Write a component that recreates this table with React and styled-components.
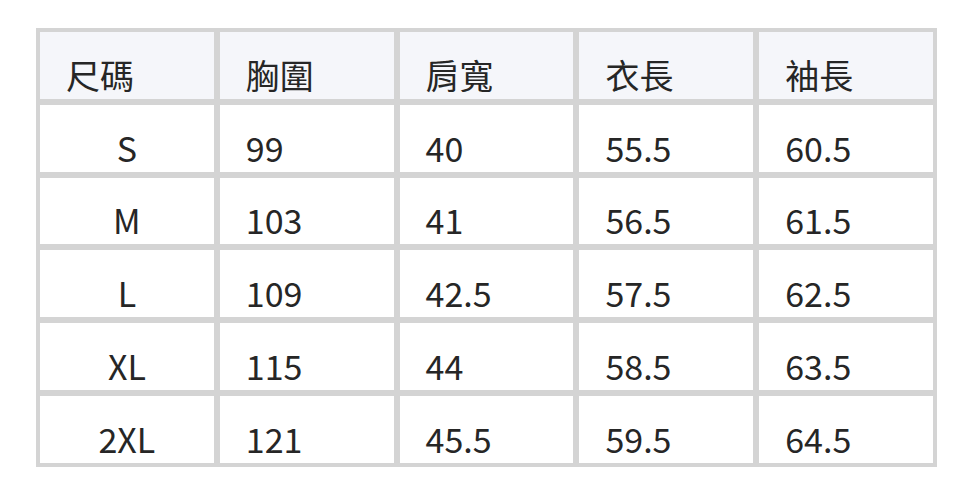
import React from 'react';
import styled, { createGlobalStyle } from 'styled-components';

const GlobalStyle = createGlobalStyle`
  html, body {
    margin: 0;
    padding: 0;
    background: #ffffff;
  }
  body {
    font-family: "Noto Sans CJK TC", "Noto Sans", sans-serif;
  }
`;

const Page = styled.div`
  padding: 28px 0 0 36px;
`;

const Table = styled.div`
  width: 901px;
  box-sizing: border-box;
  display: grid;
  grid-template-columns: repeat(5, 1fr);
  grid-auto-rows: 66.8px;
  gap: 6px;
  padding: 4px;
  background: #d4d4d4;
`;

const Cell = styled.div`
  display: flex;
  align-items: flex-end;
  justify-content: ${(p) => (p.$center ? 'center' : 'flex-start')};
  padding: 0 0 0 ${(p) => (p.$center ? '0' : '26px')};
  background: ${(p) => (p.$head ? '#f5f6fa' : '#ffffff')};
  color: #262626;
  font-size: 34px;
  line-height: normal;
  white-space: nowrap;
  overflow: hidden;
`;

const headers = ['尺碼', '胸圍', '肩寬', '衣長', '袖長'];

const rows = [
  ['S', '99', '40', '55.5', '60.5'],
  ['M', '103', '41', '56.5', '61.5'],
  ['L', '109', '42.5', '57.5', '62.5'],
  ['XL', '115', '44', '58.5', '63.5'],
  ['2XL', '121', '45.5', '59.5', '64.5'],
];

export default function App() {
  return (
    <Page>
      <GlobalStyle />
      <Table>
        {headers.map((h) => (
          <Cell key={h} $head>
            {h}
          </Cell>
        ))}
        {rows.map((row) =>
          row.map((v, i) => (
            <Cell key={row[0] + i} $center={i === 0}>
              {v}
            </Cell>
          ))
        )}
      </Table>
    </Page>
  );
}
